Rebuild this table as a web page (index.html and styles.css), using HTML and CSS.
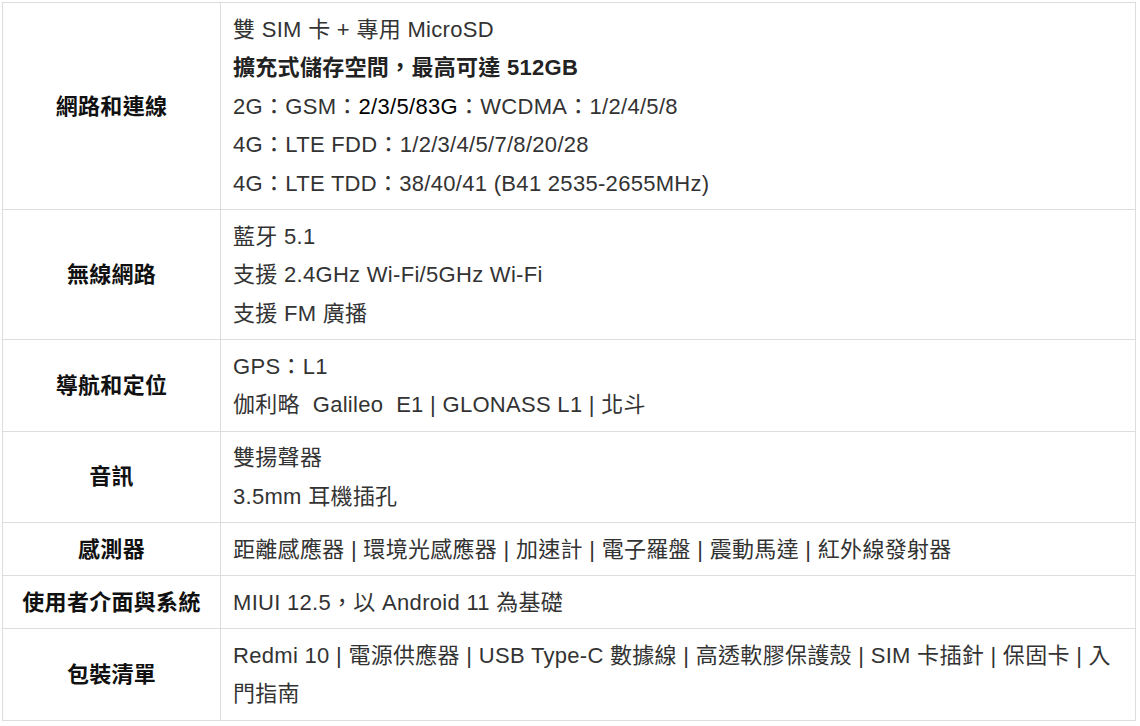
FILE: index.html
```html
<!DOCTYPE html>
<html lang="zh-Hant">
<head>
<meta charset="utf-8">
<title>規格</title>
<link rel="stylesheet" href="styles.css">
</head>
<body>
<table class="spec">
  <tbody>
    <tr>
      <th>網路和連線</th>
      <td>
        <p>雙 SIM 卡 + 專用 MicroSD</p>
        <p><strong>擴充式儲存空間，最高可達 512GB</strong></p>
        <p>2G：GSM：<span class="dark">2/3/5/83G</span>：WCDMA：1/2/4/5/8</p>
        <p>4G：LTE FDD：1/2/3/4/5/7/8/20/28</p>
        <p>4G：LTE TDD：38/40/41 (B41 2535-2655MHz)</p>
      </td>
    </tr>
    <tr>
      <th>無線網路</th>
      <td>
        <p>藍牙 5.1</p>
        <p>支援 2.4GHz Wi-Fi/5GHz Wi-Fi</p>
        <p>支援 FM 廣播</p>
      </td>
    </tr>
    <tr>
      <th>導航和定位</th>
      <td>
        <p>GPS：L1</p>
        <p>伽利略&nbsp; Galileo&nbsp; E1 | GLONASS L1 | 北斗</p>
      </td>
    </tr>
    <tr>
      <th>音訊</th>
      <td>
        <p>雙揚聲器</p>
        <p>3.5mm 耳機插孔</p>
      </td>
    </tr>
    <tr>
      <th>感測器</th>
      <td><p>距離感應器 | 環境光感應器 | 加速計 | 電子羅盤 | 震動馬達 | 紅外線發射器</p></td>
    </tr>
    <tr>
      <th>使用者介面與系統</th>
      <td><p>MIUI 12.5，以 Android 11 為基礎</p></td>
    </tr>
    <tr>
      <th>包裝清單</th>
      <td><p>Redmi 10 | 電源供應器 | USB Type-C 數據線 | 高透軟膠保護殼 | SIM 卡插針 | 保固卡 | 入門指南</p></td>
    </tr>
  </tbody>
</table>
</body>
</html>
```

FILE: styles.css
```css
html, body {
  margin: 0;
  padding: 0;
  background: #ffffff;
}

body {
  padding: 2px 0 0 2px;
  font-family: "Liberation Sans", "Noto Sans CJK TC", sans-serif;
  font-size: 22px;
  letter-spacing: 0.3px;
  color: #333333;
}

.spec {
  border-collapse: collapse;
  width: 1134px;
  table-layout: fixed;
}

.spec th,
.spec td {
  border: 1px solid #dddddd;
  line-height: 38.5px;
  padding: 7.5px 12px 6px;
  vertical-align: middle;
}

.spec th {
  width: 193px;
  text-align: center;
  font-weight: bold;
  color: #111111;
}

.spec td {
  text-align: left;
}

.spec p {
  margin: 0;
}

.spec strong {
  font-weight: bold;
  color: #222222;
}

.spec .dark {
  color: #000000;
}
```
